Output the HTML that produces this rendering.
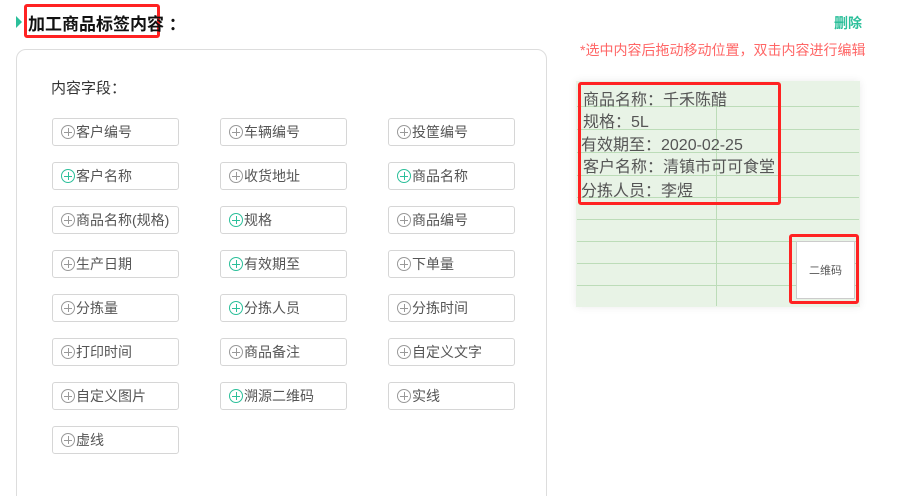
<!DOCTYPE html>
<html><head><meta charset="utf-8"><style>
*{margin:0;padding:0;box-sizing:border-box}
html,body{width:905px;height:496px;overflow:hidden}
body{background:#fff;font-family:"Liberation Sans","Noto Sans CJK SC",sans-serif;position:relative;color:#333}
.abs{position:absolute}
.btn{position:absolute;width:127px;height:28px;border:1px solid #d6d6d6;border-radius:3px;font-size:14px;color:#555;line-height:26px;padding-left:8px;white-space:nowrap}
.btn i{display:inline-block;width:14px;height:14px;border:1px solid #999;border-radius:50%;vertical-align:-2px;position:relative;margin-right:1px}
.btn i:before{content:"";position:absolute;left:2px;top:6px;width:8px;height:1px;background:#999}
.btn i:after{content:"";position:absolute;left:6px;top:2px;width:1px;height:8px;background:#999}
.btn i.g{border-color:#2bbf9a}.btn i.g:before,.btn i.g:after{background:#2bbf9a}
.hl{position:absolute;left:577px;width:282px;height:1px;background:#bcdcb8}
.lbl{position:absolute;left:583px;font-size:16px;color:#555;white-space:nowrap}
</style></head><body>
<div class="abs" style="left:16px;top:16px;width:0;height:0;border-top:6px solid transparent;border-bottom:6px solid transparent;border-left:6px solid #2bbf9a"></div>
<div class="abs" style="left:24px;top:4px;width:136px;height:34px;border:3px solid #f22;border-radius:3px"></div>
<div class="abs" style="left:28px;top:10px;font-size:17px;font-weight:bold;color:#111;white-space:nowrap">加工商品标签内容 ：</div>
<div class="abs" style="left:834px;top:13px;font-size:14px;color:#2bbf9a;font-weight:bold">删除</div>
<div class="abs" style="left:580px;top:40px;font-size:14px;color:#f66;white-space:nowrap">*选中内容后拖动移动位置，双击内容进行编辑</div>
<div class="abs" style="left:16px;top:49px;width:531px;height:460px;border:1px solid #ddd;border-radius:10px"></div>
<div class="abs" style="left:51px;top:77px;font-size:15px;color:#333">内容字段：</div>

<div class="btn" style="left:52px;top:118px"><i></i>客户编号</div>
<div class="btn" style="left:220px;top:118px"><i></i>车辆编号</div>
<div class="btn" style="left:388px;top:118px"><i></i>投筐编号</div>
<div class="btn" style="left:52px;top:162px"><i class="g"></i>客户名称</div>
<div class="btn" style="left:220px;top:162px"><i></i>收货地址</div>
<div class="btn" style="left:388px;top:162px"><i class="g"></i>商品名称</div>
<div class="btn" style="left:52px;top:206px"><i></i>商品名称(规格)</div>
<div class="btn" style="left:220px;top:206px"><i class="g"></i>规格</div>
<div class="btn" style="left:388px;top:206px"><i></i>商品编号</div>
<div class="btn" style="left:52px;top:250px"><i></i>生产日期</div>
<div class="btn" style="left:220px;top:250px"><i class="g"></i>有效期至</div>
<div class="btn" style="left:388px;top:250px"><i></i>下单量</div>
<div class="btn" style="left:52px;top:294px"><i></i>分拣量</div>
<div class="btn" style="left:220px;top:294px"><i class="g"></i>分拣人员</div>
<div class="btn" style="left:388px;top:294px"><i></i>分拣时间</div>
<div class="btn" style="left:52px;top:338px"><i></i>打印时间</div>
<div class="btn" style="left:220px;top:338px"><i></i>商品备注</div>
<div class="btn" style="left:388px;top:338px"><i></i>自定义文字</div>
<div class="btn" style="left:52px;top:382px"><i></i>自定义图片</div>
<div class="btn" style="left:220px;top:382px"><i class="g"></i>溯源二维码</div>
<div class="btn" style="left:388px;top:382px"><i></i>实线</div>
<div class="btn" style="left:52px;top:426px"><i></i>虚线</div>

<div class="abs" style="left:576px;top:81px;width:284px;height:226px;background:#e8f3e6;box-shadow:0 0 8px rgba(0,0,0,.08)"></div>
<div class="hl" style="top:106px"></div><div class="hl" style="top:129px"></div><div class="hl" style="top:152px"></div><div class="hl" style="top:175px"></div><div class="hl" style="top:197px"></div><div class="hl" style="top:219px"></div><div class="hl" style="top:241px"></div><div class="hl" style="top:263px"></div><div class="hl" style="top:285px"></div>
<div class="abs" style="left:716px;top:106px;width:1px;height:200px;background:#bcdcb8"></div>
<div class="lbl" style="top:86px">商品名称：千禾陈醋</div>
<div class="lbl" style="top:108px">规格：5L</div>
<div class="lbl" style="top:131px;left:581px">有效期至：2020-02-25</div>
<div class="lbl" style="top:153px">客户名称：清镇市可可食堂</div>
<div class="lbl" style="top:177px;left:581px">分拣人员：李煜</div>
<div class="abs" style="left:578px;top:82px;width:203px;height:123px;border:3px solid #f22;border-radius:3px"></div>
<div class="abs" style="left:796px;top:241px;width:59px;height:58px;background:#fff;border:1px solid #ccc;font-size:11px;color:#555;text-align:center;line-height:58px">二维码</div>
<div class="abs" style="left:789px;top:234px;width:70px;height:70px;border:3px solid #f22;border-radius:3px"></div>
</body></html>
